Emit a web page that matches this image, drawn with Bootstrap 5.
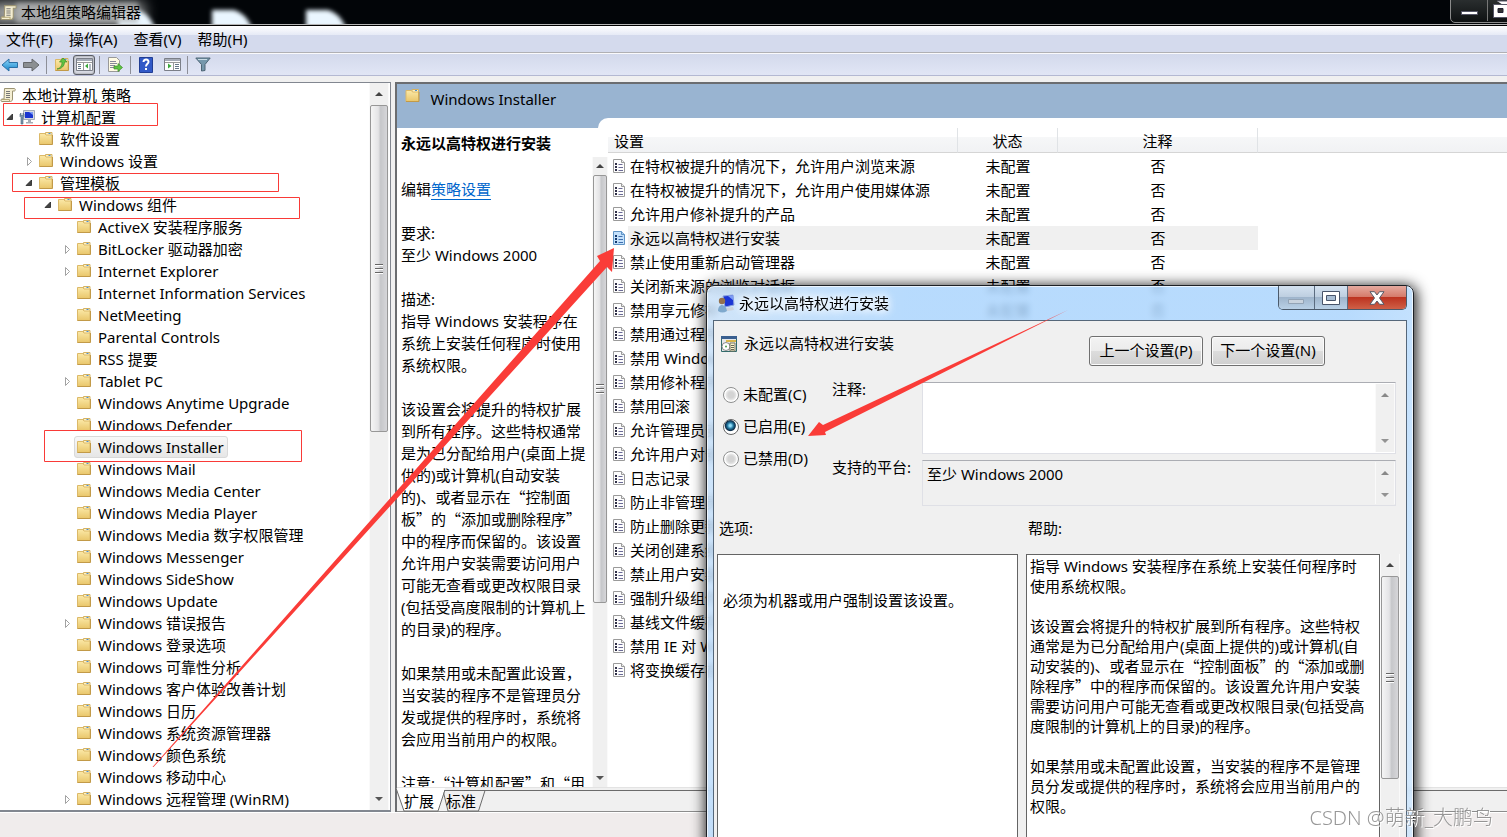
<!DOCTYPE html>
<html lang="zh-CN">
<head>
<meta charset="utf-8">
<meta name="viewport" content="width=device-width, initial-scale=1">
<title>本地组策略编辑器</title>
<link href="https://cdn.jsdelivr.net/npm/bootstrap@5.3.0/dist/css/bootstrap.min.css" rel="stylesheet">
<style>
  body { font: 15px/22px "Noto Sans", "Noto Sans CJK SC", sans-serif; color: #000; background: #f0f0f0; }
  button, textarea { font: inherit; color: inherit; }
  svg { display: block; flex: none; }
  .cjk { font-family: "Noto Sans CJK SC", sans-serif; }
  .plain { border: 0; background: none; padding: 0; }

  /* main window frame */
  .titlebar { height: 26px; background: #020508; border-bottom: 1px solid #000; box-shadow: inset 0 -1px #b5b5b5; overflow: hidden; }
  .titlebar .glow { left: 0; top: 0; }
  .titlebar h1 { font-size: 15px; line-height: 24px; }
  .caption { top: -2px; right: -37px; width: 94px; height: 25px; border: 1px solid #8b8b8b; border-radius: 0 0 5px 5px; background: linear-gradient(#2b2f30, #0e1112); }
  .menus { height: 27px; background: linear-gradient(#fff, #e6eaf6 9px, #d4daed 9px); border-bottom: 1px solid #b0b0b4; box-shadow: 0 1px #fafafc; padding-left: 6px; }
  .menus button { margin-right: 16px; }
  .tools { height: 22px; margin-top: 1px; background: linear-gradient(#d3d9ec, #e1e6f5); border-bottom: 1px solid #b4b9d2; }
  .tools button { width: 22px; height: 20px; display: flex; align-items: center; justify-content: center; }
  .tools button:first-child { width: 20px; }
  .tools .sep { width: 1px; height: 18px; background: #8d8f98; }
  .tools .held { border: 1px solid #5a5d66; border-radius: 3px; background: #d7dae3; box-shadow: inset 0 0 2px #777; }
  .panes { margin-top: 6px; min-height: 0; }

  /* tree */
  .tree-pane { flex: 0 0 391px; border: solid #828790; border-width: 1px 1px 2px 0; background: #fff; }
  .tree { padding-top: 1px; min-width: 0; overflow: hidden; }
  .tree li { display: flex; align-items: center; height: 22px; white-space: nowrap; }
  .tree .tw { width: 15px; flex: none; }
  .tree .label { padding-left: 6px; }
  .l0 { padding-left: 0; } .l1 { padding-left: 4px; } .l2 { padding-left: 23px; }
  .l3 { padding-left: 42px; } .l4 { padding-left: 61px; }
  .tree .picked { display: flex; align-items: center; height: 22px; margin-left: -2px; padding: 0 3px 0 1px; border: 1px solid #d9d9d9; border-radius: 3px; background: linear-gradient(#f8f8f8, #e6e6e6); }

  /* scroll bars */
  .sbar { width: 20px; flex: none; display: flex; flex-direction: column; background: #f0f0f0; border: solid #fafafa; border-width: 0 1px; }
  .sbar.narrow { width: 16px; }
  .sbar .end { height: 22px; display: flex; align-items: center; justify-content: center; flex: none; }
  .sbar.narrow .end { height: 18px; }
  .sbar .end::before { content: ""; border: solid transparent; border-width: 0 4px 4px; border-bottom-color: #444; }
  .sbar .end.dn::before { border-width: 4px 4px 0; border-top-color: #555; }
  .sbar.off .end::before { opacity: .6; }
  .sbar .thumb { border: 1px solid #979797; border-radius: 2px; background: linear-gradient(90deg, #f5f5f5, #e4e4e6 45%, #c6c7ca 60%, #d6d6d9); display: flex; align-items: center; justify-content: center; }
  .grip { width: 8px; height: 10px; background: repeating-linear-gradient(#666 0 1px, #fff 1px 2px, transparent 2px 4px); }

  /* right pane */
  .main-pane { margin-left: 4px; border-left: 2px solid #6b6d70; border-top: 2px solid #6b6d70; min-width: 0; }
  .banner { height: 44px; background: #99b4d1; padding: 4px 0 0 7px; }
  .banner .notch { left: 201px; right: 0; bottom: 0; height: 10px; background: #fff; border-top-left-radius: 10px; }
  .detail { flex: 0 0 211px; background: #fff; }
  .detail h2 { font-size: 15px; line-height: 22px; padding: 4px 0 3px 4px; }
  .detail .body { padding: 21px 0 0 4px; overflow: hidden; white-space: nowrap; }
  .detail p { margin-bottom: 22px; }
  .detail a { color: #0066cc; text-decoration: none; border-bottom: 1px solid #0066cc; }
  .listing { background: #fff; min-width: 0; overflow: hidden; }
  .listing table { table-layout: fixed; width: 100%; margin: 0; border-collapse: separate; border-spacing: 0; }
  .listing th { height: 25px; padding: 3px 0 0; font-weight: 400; line-height: 21px; text-align: center; background: linear-gradient(#fff 9px, #f6f7f8 9px, #f1f2f4); border-bottom: 1px solid #d5d5d5; border-right: 1px solid #e0e3e6; }
  .listing th:first-child { text-align: left; padding-left: 6px; }
  .listing th:last-child { border-right: 0; }
  .listing tbody::before { content: ""; display: table-row; height: 1px; }
  .listing td { height: 24px; padding: 0; text-align: center; white-space: nowrap; }
  .listing td:first-child > div { display: flex; align-items: center; padding-left: 4px; height: 24px; text-align: left; }
  .listing td:first-child span { flex: 1; padding-left: 2px; line-height: 24px; margin-left: 2px; }
  .listing tr.on td:nth-child(n+2):nth-child(-n+3), .listing tr.on span { background: #f0f0f0; }
  .strip { height: 25px; background: #f0f0f0; border-top: 1px solid #e3e3e3; border-bottom: 1px solid #8c8c8c; padding-left: 7px; }
  .strip svg { left: -2px; top: 0; }
  .strip .edge { left: 48px; right: 0; top: 2px; height: 1px; background: #6b6b6b; }
  .strip button { margin-top: 2px; margin-right: 12px; }
  .status { height: 25px; background: #f0ecec; border-top: 1px solid #fff; }

  /* floating dialog */
  .dlg { left: 706px; top: 285px; bottom: -14px; width: 708px; border: 1px solid #1d2126; border-radius: 8px; padding: 0 6px; background: linear-gradient(100deg, rgba(200,224,248,.82), rgba(170,212,253,.84) 25%, rgba(170,212,253,.84) 80%, rgba(205,230,253,.84)); backdrop-filter: blur(3px); box-shadow: 1px 2px 14px 2px rgba(0,0,0,.85), inset 0 0 0 1px rgba(255,255,255,.7); }
  .dlg-title { height: 34px; }
  .dlg-title h2 { font-size: 15px; line-height: 34px; text-shadow: 0 0 8px #fff, 0 0 8px #fff, 0 0 8px #fff; }
  .capset { width: 129px; height: 24px; border: 1px solid #4b5a6b; border-top: 0; border-radius: 0 0 5px 5px; overflow: hidden; }
  .capset button { border-right: 1px solid #5b6c80; background: linear-gradient(#d4e2f0, #bccddf 50%, #9fb5cc 50%, #b9d0e6); display: flex; align-items: center; justify-content: center; }
  .capset .shut { background: linear-gradient(#e5aa9f, #d47767 50%, #bd3320 50%, #cf6047); border-right: 0; }
  .dlg-body { background: #f0f0f0; border: 1px solid #55677a; padding: 15px 6px 0 3px; }
  .dlg-name { line-height: 14px; padding-left: 7px; }
  .step { width: 114px; height: 30px; padding: 0 0 2px; border: 1px solid #707070; border-radius: 3px; background: linear-gradient(#f3f3f3, #ebebeb 50%, #dddddd 50%, #cfcfcf); box-shadow: inset 0 0 0 1px #fbfbfb; }
  .step.last { margin-right: 75px; }
  .choices { width: 109px; margin: -4px 0 0 2px; }
  .pick { height: 32px; display: flex; align-items: center; }
  .pick input { appearance: none; width: 16px; height: 16px; margin: 2px 4px 0 0; border: 1px solid #8e8f8f; border-radius: 50%; background: radial-gradient(circle, #d4d4d4 0 3px, #e8e8e8 5px, #fff 6px); }
  .pick input:checked { background: radial-gradient(circle at 45% 40%, #8fdcf8 0 1px, #2277a0 3px, #0d2c48 5px, #fff 6px); border-color: #666; }
  .cap-col { width: 90px; line-height: 15px; }
  .field { height: 72px; border: 1px solid #dfe0e6; border-top-color: #abadb3; background: #fff; }
  .field textarea { resize: none; border: 0; outline: 0; background: none; overflow: hidden; padding: 2px 4px; line-height: 22px; }
  .field.dim { height: 46px; background: #f0f0f0; }
  .field .sbar { margin: 1px 0; }
  .group-name { height: 40px; padding: 3px 2px 0; }
  .box { background: #fff; border: 1px solid #646464; }
  .opts { padding: 34px 5px; }
  .help { line-height: 20px; white-space: nowrap; padding: 1px 3px; overflow: hidden; }
  .help p { margin-bottom: 20px; }

  .ink { inset: 0; pointer-events: none; }
  .brand { right: 14px; bottom: 7px; font-size: 20px; line-height: 24px; font-weight: 300; color: rgba(140,140,140,.9); text-shadow: 1px 1px #fff; }
</style>
</head>
<body>
<svg width="0" height="0" class="position-absolute" aria-hidden="true">
  <defs>
    <linearGradient id="gf" x1="0" y1="0" x2="0" y2="1"><stop offset="0" stop-color="#fbe9a8"/><stop offset="1" stop-color="#e9c66a"/></linearGradient>
    <linearGradient id="gb" x1="0" y1="0" x2="0" y2="1"><stop offset="0" stop-color="#8fd8fb"/><stop offset="1" stop-color="#1583c9"/></linearGradient>
    <symbol id="folder" viewBox="0 0 16 16"><path d="M7.500 1.500h6.500v3H7.500z" fill="#fff3c4" stroke="#d4b263"/><path d="M10.500 2.500h2" stroke="#4b8fd0"/><path d="M1.500 2.500h5.500l1 1.500h6v9.500H1.500z" fill="url(#gf)" stroke="#dcb968"/><path d="M1.500 13.500h13V4" fill="none" stroke="#c29a48"/></symbol>
    <symbol id="scroll" viewBox="0 0 16 16"><path d="M4.500 1.500h10c1 0 1 2.500 0 2.500H12.500v8c0 1.500-1 2.500-2 2.500H2c-1.500 0-1.500-2.500 0-2.500h2z" fill="#f4eed2" stroke="#9b9372"/><path d="M6 4.500h4M6 6.500h4M6 8.500h4M6 10.500h4" stroke="#777"/><path d="M2 12.500h7.500v2" fill="none" stroke="#b3a878"/></symbol>
    <symbol id="pc" viewBox="0 0 16 16"><path d="M4.500 1.500h11v9h-11z" fill="#d6dbe3" stroke="#a3abb8"/><path d="M6 3h8v6H6z" fill="#1a36d0"/><path d="M10 3h4v3z" fill="#7c9cf5"/><path d="M9 11h3v2h2v1.500H7V13h2z" fill="#a5acb5"/><path d="M1 5v2.500l1 1V15h2V8.500l1-1V5L4 4v2.500H2V4z" fill="#7794ac" stroke="#4d667d" stroke-width=".6"/></symbol>
    <symbol id="doc" viewBox="0 0 14 16"><path d="M1.500 1.500h8l3 3v10h-11z" fill="#fdfdfd" stroke="#9a9a9a"/><path d="M9.500 1.500v3h3" fill="#eee" stroke="#9a9a9a"/><path d="M3 5h2v2H3zM3 8h2v2H3zM3 11h2v2H3z" fill="#303048"/><path d="M6.500 6.500h4M6.500 9.500h4.500M6.500 12.500h4.500" stroke="#6b6b96"/></symbol>
    <symbol id="docon" viewBox="0 0 14 16"><path d="M1.500 1.500h8l3 3v10h-11z" fill="#c3e0fb" stroke="#5f93c4"/><path d="M9.500 1.500v3h3" fill="#a9cdf2" stroke="#5f93c4"/><path d="M3 5h2v2H3zM3 8h2v2H3zM3 11h2v2H3z" fill="#14386c"/><path d="M6.500 6.500h4M6.500 9.500h4.500M6.500 12.500h4.500" stroke="#3f6fae"/></symbol>
    <symbol id="open" viewBox="0 0 16 16"><path d="M8.500 5v5.500H3z" fill="#444" stroke="#222" stroke-width=".8"/></symbol>
    <symbol id="shut" viewBox="0 0 16 16"><path d="M4.500 4.500l4 4-4 4z" fill="#fff" stroke="#a2a2a2"/></symbol>
  </defs>
</svg>

<div class="d-flex flex-column vh-100 position-relative overflow-hidden">
  <header class="titlebar position-relative flex-shrink-0 d-flex">
    <svg class="glow position-absolute" width="400" height="24" aria-hidden="true">
      <defs><filter id="b3" x="-20%" y="-60%" width="140%" height="220%"><feGaussianBlur stdDeviation="2"/></filter><filter id="b8" x="-20%" y="-90%" width="140%" height="280%"><feGaussianBlur stdDeviation="7"/></filter></defs>
      <rect x="-10" y="2" width="154" height="22" fill="#a2a4a4" filter="url(#b8)"/>
      <path d="M118 28V11h22q10 4 15 17zM212 28V10h22q12 3 18 18zM306 28V10h22q12 3 18 18z" fill="#eaf6ff" filter="url(#b3)"/>
      <rect x="16" y="3" width="122" height="20" fill="#b4b6b6" opacity=".7" filter="url(#b3)"/>
    </svg>
    <svg class="position-relative ms-n1 mt-1" width="17" height="17"><use href="#scroll"/></svg>
    <h1 class="position-relative m-0 ps-1 fw-normal">本地组策略编辑器</h1>
    <div class="caption position-absolute">
      <svg width="94" height="24"><path d="M36.500 0v22" stroke="#777"/><path d="M10.500 12.500h16v3h-16z" fill="#fff" stroke="#556"/><path d="M46 2h14v9M42.500 5.500h15v13h-15z" fill="#fff" stroke="#556"/><path d="M47 9.500h5v4h-5z" fill="#333" stroke="#223"/></svg>
    </div>
  </header>

  <nav class="menus d-flex align-items-center flex-shrink-0">
    <button class="plain">文件(F)</button><button class="plain">操作(A)</button><button class="plain">查看(V)</button><button class="plain">帮助(H)</button>
  </nav>

  <div class="tools d-flex align-items-center flex-shrink-0" role="toolbar">
    <button class="plain" aria-label="后退"><svg width="18" height="16"><path d="M1 8l7-6v3.500h8.500v5H8V14z" fill="url(#gb)" stroke="#2b6fa5"/></svg></button>
    <button class="plain" aria-label="前进"><svg width="18" height="16"><path d="M17 8l-7-6v3.500H1.500v5H10V14z" fill="#8b8f92" stroke="#66696c"/></svg></button>
    <span class="sep ms-1 me-1"></span>
    <button class="plain" aria-label="向上"><svg width="16" height="16"><use href="#folder"/><path d="M3 12c4-1 5-4 5-7H5.500L9 1l4 4h-2.500c0 4-3 7-7.500 7z" fill="#5fc443" stroke="#3d8c28" stroke-width=".7"/></svg></button>
    <button class="plain held" aria-label="显示树"><svg width="17" height="15"><path d="M.5 1.500h16v12H.5z" fill="#fff" stroke="#7b7f88"/><path d="M1 2h15v2H1z" fill="#a6acb8"/><path d="M1 5.500h15M7.500 6v7" stroke="#999"/><path d="M2 7.500h3M2 9.500h3M2 11.500h3M14 7v6" stroke="#678"/><path d="M12 6.500v5L9 9z" fill="#3ba83b"/></svg></button>
    <span class="sep ms-1 me-1"></span>
    <button class="plain" aria-label="导出"><svg width="16" height="16"><path d="M1.500.5h8l3 3v11h-11z" fill="#fffbe4" stroke="#999"/><path d="M3 4.500h6M3 6.500h7M3 8.500h5M3 10.500h4" stroke="#889"/><path d="M7 9h4V6.500l4.500 4-4.500 4V12H7z" fill="#5fc443" stroke="#3d8c28" stroke-width=".7"/></svg></button>
    <span class="sep ms-1 me-1"></span>
    <button class="plain" aria-label="帮助"><svg width="14" height="16"><path d="M.5.5h13v15H.5z" fill="#3159c7" stroke="#213e94"/><path d="M4.500 5c0-3.500 5.500-3 5 0-.2 1.800-2.500 1.800-2.500 4.500M7 11v2" fill="none" stroke="#fff" stroke-width="2"/></svg></button>
    <button class="plain ms-1" aria-label="窗格"><svg width="17" height="15"><path d="M.5 1.500h16v12H.5z" fill="#fff" stroke="#7b7f88"/><path d="M1 2h15v2H1z" fill="#a6acb8"/><path d="M1 5.500h15M9.500 6v7" stroke="#999"/><path d="M11 7.500h4M11 9.500h4M11 11.500h4" stroke="#678"/><path d="M4 6.500v5L7.500 9z" fill="#3ba83b"/></svg></button>
    <span class="sep ms-1 me-1"></span>
    <button class="plain" aria-label="筛选"><svg width="16" height="15"><path d="M.8 1h14.400L10 7.500v6L6.500 14V7.500z" fill="#7698ac" stroke="#4d6574"/><path d="M3 2.500h9" stroke="#c9dce6"/></svg></button>
  </div>

  <div class="panes flex-grow-1 d-flex">
    <aside class="tree-pane d-flex">
      <ul class="tree list-unstyled m-0 flex-grow-1">
        <li class="l0"><svg width="16" height="16"><use href="#scroll"/></svg><span class="label">本地计算机 策略</span></li>
        <li class="l1"><svg class="tw" height="16"><use href="#open" width="16" height="16"/></svg><svg width="16" height="16"><use href="#pc"/></svg><span class="label">计算机配置</span></li>
        <li class="l2"><span class="tw"></span><svg width="16" height="16"><use href="#folder"/></svg><span class="label">软件设置</span></li>
        <li class="l2"><svg class="tw" height="16"><use href="#shut" width="16" height="16"/></svg><svg width="16" height="16"><use href="#folder"/></svg><span class="label">Windows 设置</span></li>
        <li class="l2"><svg class="tw" height="16"><use href="#open" width="16" height="16"/></svg><svg width="16" height="16"><use href="#folder"/></svg><span class="label">管理模板</span></li>
        <li class="l3"><svg class="tw" height="16"><use href="#open" width="16" height="16"/></svg><svg width="16" height="16"><use href="#folder"/></svg><span class="label">Windows 组件</span></li>
        <li class="l4"><span class="tw"></span><svg width="16" height="16"><use href="#folder"/></svg><span class="label">ActiveX 安装程序服务</span></li>
        <li class="l4"><svg class="tw" height="16"><use href="#shut" width="16" height="16"/></svg><svg width="16" height="16"><use href="#folder"/></svg><span class="label">BitLocker 驱动器加密</span></li>
        <li class="l4"><svg class="tw" height="16"><use href="#shut" width="16" height="16"/></svg><svg width="16" height="16"><use href="#folder"/></svg><span class="label">Internet Explorer</span></li>
        <li class="l4"><span class="tw"></span><svg width="16" height="16"><use href="#folder"/></svg><span class="label">Internet Information Services</span></li>
        <li class="l4"><span class="tw"></span><svg width="16" height="16"><use href="#folder"/></svg><span class="label">NetMeeting</span></li>
        <li class="l4"><span class="tw"></span><svg width="16" height="16"><use href="#folder"/></svg><span class="label">Parental Controls</span></li>
        <li class="l4"><span class="tw"></span><svg width="16" height="16"><use href="#folder"/></svg><span class="label">RSS 提要</span></li>
        <li class="l4"><svg class="tw" height="16"><use href="#shut" width="16" height="16"/></svg><svg width="16" height="16"><use href="#folder"/></svg><span class="label">Tablet PC</span></li>
        <li class="l4"><span class="tw"></span><svg width="16" height="16"><use href="#folder"/></svg><span class="label">Windows Anytime Upgrade</span></li>
        <li class="l4"><span class="tw"></span><svg width="16" height="16"><use href="#folder"/></svg><span class="label">Windows Defender</span></li>
        <li class="l4"><span class="tw"></span><span class="picked"><svg width="16" height="16"><use href="#folder"/></svg><span class="label">Windows Installer</span></span></li>
        <li class="l4"><span class="tw"></span><svg width="16" height="16"><use href="#folder"/></svg><span class="label">Windows Mail</span></li>
        <li class="l4"><span class="tw"></span><svg width="16" height="16"><use href="#folder"/></svg><span class="label">Windows Media Center</span></li>
        <li class="l4"><span class="tw"></span><svg width="16" height="16"><use href="#folder"/></svg><span class="label">Windows Media Player</span></li>
        <li class="l4"><span class="tw"></span><svg width="16" height="16"><use href="#folder"/></svg><span class="label">Windows Media 数字权限管理</span></li>
        <li class="l4"><span class="tw"></span><svg width="16" height="16"><use href="#folder"/></svg><span class="label">Windows Messenger</span></li>
        <li class="l4"><span class="tw"></span><svg width="16" height="16"><use href="#folder"/></svg><span class="label">Windows SideShow</span></li>
        <li class="l4"><span class="tw"></span><svg width="16" height="16"><use href="#folder"/></svg><span class="label">Windows Update</span></li>
        <li class="l4"><svg class="tw" height="16"><use href="#shut" width="16" height="16"/></svg><svg width="16" height="16"><use href="#folder"/></svg><span class="label">Windows 错误报告</span></li>
        <li class="l4"><span class="tw"></span><svg width="16" height="16"><use href="#folder"/></svg><span class="label">Windows 登录选项</span></li>
        <li class="l4"><span class="tw"></span><svg width="16" height="16"><use href="#folder"/></svg><span class="label">Windows 可靠性分析</span></li>
        <li class="l4"><span class="tw"></span><svg width="16" height="16"><use href="#folder"/></svg><span class="label">Windows 客户体验改善计划</span></li>
        <li class="l4"><span class="tw"></span><svg width="16" height="16"><use href="#folder"/></svg><span class="label">Windows 日历</span></li>
        <li class="l4"><span class="tw"></span><svg width="16" height="16"><use href="#folder"/></svg><span class="label">Windows 系统资源管理器</span></li>
        <li class="l4"><span class="tw"></span><svg width="16" height="16"><use href="#folder"/></svg><span class="label">Windows 颜色系统</span></li>
        <li class="l4"><span class="tw"></span><svg width="16" height="16"><use href="#folder"/></svg><span class="label">Windows 移动中心</span></li>
        <li class="l4"><svg class="tw" height="16"><use href="#shut" width="16" height="16"/></svg><svg width="16" height="16"><use href="#folder"/></svg><span class="label">Windows 远程管理 (WinRM)</span></li>
      </ul>
      <div class="sbar" style="margin-right:1px"><div class="end"></div><div class="thumb" style="height:45%"><div class="grip"></div></div><div class="end dn mt-auto"></div></div>
    </aside>

    <main class="main-pane flex-grow-1 d-flex flex-column">
      <div class="banner position-relative flex-shrink-0 d-flex align-items-start">
        <svg width="17" height="16"><use href="#folder"/></svg><span class="ps-2">&hairsp;Windows Installer</span>
        <div class="notch position-absolute"></div>
      </div>
      <div class="flex-grow-1 d-flex overflow-hidden bg-white">
        <section class="detail d-flex flex-column">
          <h2 class="m-0 fw-bold">永远以高特权进行安装</h2>
          <div class="d-flex flex-grow-1 overflow-hidden">
            <div class="body flex-grow-1">
              <p>编辑<a href="#">策略设置</a></p>
              <p>要求:<br>至少 Windows 2000</p>
              <p>描述:<br>指导 Windows 安装程序在<br>系统上安装任何程序时使用<br>系统权限。</p>
              <p>该设置会将提升的特权扩展<br>到所有程序。这些特权通常<br>是为已分配给用户(桌面上提<br>供的)或计算机(自动安装<br>的)、或者显示在<span class="cjk">“</span>控制面<br>板<span class="cjk">”</span>的<span class="cjk">“</span>添加或删除程序<span class="cjk">”</span><br>中的程序而保留的。该设置<br>允许用户安装需要访问用户<br>可能无查看或更改权限目录<br>(包括受高度限制的计算机上<br>的目录)的程序。</p>
              <p>如果禁用或未配置此设置，<br>当安装的程序不是管理员分<br>发或提供的程序时，系统将<br>会应用当前用户的权限。</p>
              <p>注意:<span class="cjk">“</span>计算机配置<span class="cjk">”</span>和<span class="cjk">“</span>用</p>
            </div>
            <div class="sbar narrow"><div class="end"></div><div class="thumb" style="height:68%"><div class="grip"></div></div><div class="end dn mt-auto"></div></div>
          </div>
        </section>
        <section class="listing flex-grow-1">
          <table>
            <colgroup><col style="width:350px"><col style="width:100px"><col style="width:200px"><col></colgroup>
            <thead><tr><th>设置</th><th>状态</th><th>注释</th><th></th></tr></thead>
            <tbody>
              <tr><td><div><svg width="14" height="16"><use href="#doc"/></svg><span>在特权被提升的情况下，允许用户浏览来源</span></div></td><td>未配置</td><td>否</td><td></td></tr>
              <tr><td><div><svg width="14" height="16"><use href="#doc"/></svg><span>在特权被提升的情况下，允许用户使用媒体源</span></div></td><td>未配置</td><td>否</td><td></td></tr>
              <tr><td><div><svg width="14" height="16"><use href="#doc"/></svg><span>允许用户修补提升的产品</span></div></td><td>未配置</td><td>否</td><td></td></tr>
              <tr class="on"><td><div><svg width="14" height="16"><use href="#docon"/></svg><span>永远以高特权进行安装</span></div></td><td>未配置</td><td>否</td><td></td></tr>
              <tr><td><div><svg width="14" height="16"><use href="#doc"/></svg><span>禁止使用重新启动管理器</span></div></td><td>未配置</td><td>否</td><td></td></tr>
              <tr><td><div><svg width="14" height="16"><use href="#doc"/></svg><span>关闭新来源的浏览对话框</span></div></td><td>未配置</td><td>否</td><td></td></tr>
              <tr><td><div><svg width="14" height="16"><use href="#doc"/></svg><span>禁用享元修补</span></div></td><td>未配置</td><td>否</td><td></td></tr>
              <tr><td><div><svg width="14" height="16"><use href="#doc"/></svg><span>禁用通过程序</span></div></td><td></td><td></td><td></td></tr>
              <tr><td><div><svg width="14" height="16"><use href="#doc"/></svg><span>禁用 Windows</span></div></td><td></td><td></td><td></td></tr>
              <tr><td><div><svg width="14" height="16"><use href="#doc"/></svg><span>禁用修补程序</span></div></td><td></td><td></td><td></td></tr>
              <tr><td><div><svg width="14" height="16"><use href="#doc"/></svg><span>禁用回滚</span></div></td><td></td><td></td><td></td></tr>
              <tr><td><div><svg width="14" height="16"><use href="#doc"/></svg><span>允许管理员安</span></div></td><td></td><td></td><td></td></tr>
              <tr><td><div><svg width="14" height="16"><use href="#doc"/></svg><span>允许用户对安</span></div></td><td></td><td></td><td></td></tr>
              <tr><td><div><svg width="14" height="16"><use href="#doc"/></svg><span>日志记录</span></div></td><td></td><td></td><td></td></tr>
              <tr><td><div><svg width="14" height="16"><use href="#doc"/></svg><span>防止非管理员</span></div></td><td></td><td></td><td></td></tr>
              <tr><td><div><svg width="14" height="16"><use href="#doc"/></svg><span>防止删除更新</span></div></td><td></td><td></td><td></td></tr>
              <tr><td><div><svg width="14" height="16"><use href="#doc"/></svg><span>关闭创建系统</span></div></td><td></td><td></td><td></td></tr>
              <tr><td><div><svg width="14" height="16"><use href="#doc"/></svg><span>禁止用户安装</span></div></td><td></td><td></td><td></td></tr>
              <tr><td><div><svg width="14" height="16"><use href="#doc"/></svg><span>强制升级组件</span></div></td><td></td><td></td><td></td></tr>
              <tr><td><div><svg width="14" height="16"><use href="#doc"/></svg><span>基线文件缓存</span></div></td><td></td><td></td><td></td></tr>
              <tr><td><div><svg width="14" height="16"><use href="#doc"/></svg><span>禁用 IE 对 W</span></div></td><td></td><td></td><td></td></tr>
              <tr><td><div><svg width="14" height="16"><use href="#doc"/></svg><span>将变换缓存在</span></div></td><td></td><td></td><td></td></tr>
            </tbody>
          </table>
        </section>
      </div>
      <div class="strip position-relative flex-shrink-0 d-flex">
        <div class="edge position-absolute"></div>
        <svg class="position-absolute" width="100" height="24" aria-hidden="true"><path d="M48 2.500h42L83.500 23H53z" fill="#f0f0f0" stroke="#6b6b6b"/><path d="M1 0l8 23h34L50 0z" fill="#fff"/><path d="M1 0l8 23h34L50 2" fill="none" stroke="#6b6b6b"/></svg>
        <button class="plain position-relative">扩展</button><button class="plain position-relative">标准</button>
      </div>
    </main>
  </div>
  <footer class="status flex-shrink-0"></footer>

  <div class="dlg position-absolute d-flex flex-column" role="dialog" aria-label="永远以高特权进行安装">
    <div class="dlg-title d-flex flex-shrink-0">
      <svg class="mt-2 ms-1" width="18" height="19"><path d="M6 2l10-1 1 10-9 2z" fill="#1c36d4" stroke="#8ba1dc"/><path d="M11 2l5-.5.5 5z" fill="#7c9cf5"/><path d="M9 14l7-1 1 3-7 1z" fill="#cdd3db"/><circle cx="5" cy="7" r="3.200" fill="#94714d"/><path d="M1 17c0-8 8-8 9 0-3 2-6 2-9 0z" fill="#7fa9cd"/></svg>
      <h2 class="m-0 fw-normal ps-1 position-relative">永远以高特权进行安装</h2>
      <div class="capset ms-auto d-flex">
        <button class="plain" style="flex:36" aria-label="最小化"><svg width="18" height="12"><path d="M1.500 7.500h15v4h-15z" fill="#c9d3de" stroke="#93a3b5"/></svg></button>
        <button class="plain" style="flex:33" aria-label="最大化"><svg width="18" height="14"><path d="M.5.5h17v13H.5z" fill="#fff" stroke="#48546a"/><path d="M4.500 4.500h9v5h-9z" fill="#a8bdd4" stroke="#48546a"/></svg></button>
        <button class="plain shut" style="flex:60" aria-label="关闭"><svg width="16" height="14"><path d="M1 .7h4.500L8 4l2.500-3.300H15L10.500 7l4.500 6.300h-4.500L8 10l-2.500 3.300H1L5.500 7z" fill="#fff" stroke="#555a68"/></svg></button>
      </div>
    </div>
    <div class="dlg-body flex-grow-1 d-flex flex-column overflow-hidden">
      <div class="d-flex ps-1">
        <svg width="16" height="16"><path d="M.5.500h15v15H.5z" fill="#e6e8ea" stroke="#336b6b"/><path d="M0 0h16v3H0z" fill="#3a5f8f"/><path d="M5 4h10v2H5z" fill="#d9b64a"/><circle cx="5" cy="10.500" r="4" fill="#fff" stroke="#8a8a8a"/><circle cx="5" cy="10.500" r="1" fill="#4a9a4a"/><path d="M9 7h5v8H9z" fill="#fff5c9" stroke="#776"/><path d="M10 9.500h3M10 11.500h3M10 13.500h3" stroke="#665"/></svg>
        <span class="dlg-name flex-grow-1">永远以高特权进行安装</span>
        <button class="step me-2">上一个设置(P)</button><button class="step last">下一个设置(N)</button>
      </div>
      <div class="d-flex mt-3 ps-1">
        <div class="choices">
          <div class="pick"><input type="radio" name="st" id="r1"><label for="r1">未配置(C)</label></div>
          <div class="pick"><input type="radio" name="st" id="r2" checked><label for="r2">已启用(E)</label></div>
          <div class="pick"><input type="radio" name="st" id="r3"><label for="r3">已禁用(D)</label></div>
        </div>
        <div class="flex-grow-1 pe-1">
          <div class="d-flex"><label for="note" class="cap-col">注释:</label>
            <div class="field d-flex flex-grow-1"><textarea id="note" class="flex-grow-1" rows="3"></textarea><div class="sbar off"><div class="end"></div><div class="end dn mt-auto"></div></div></div></div>
          <div class="d-flex" style="margin-top:6px"><label for="plat" class="cap-col">支持的平台:</label>
            <div class="field dim d-flex flex-grow-1"><textarea id="plat" class="flex-grow-1" rows="2" readonly>至少 Windows 2000</textarea><div class="sbar off"><div class="end"></div><div class="end dn mt-auto"></div></div></div></div>
        </div>
      </div>
      <div class="flex-grow-1 d-flex pt-2" style="min-height:0">
        <div class="d-flex flex-column" style="width:301px"><div class="group-name">选项:</div><div class="box opts flex-grow-1">必须为机器或用户强制设置该设置。</div></div>
        <div class="d-flex flex-column flex-grow-1 ms-2"><div class="group-name">帮助:</div>
          <div class="d-flex flex-grow-1" style="min-height:0">
            <div class="box help flex-grow-1">
              <p>指导 Windows 安装程序在系统上安装任何程序时<br>使用系统权限。</p>
              <p>该设置会将提升的特权扩展到所有程序。这些特权<br>通常是为已分配给用户(桌面上提供的)或计算机(自<br>动安装的)、或者显示在<span class="cjk">“</span>控制面板<span class="cjk">”</span>的<span class="cjk">“</span>添加或删<br>除程序<span class="cjk">”</span>中的程序而保留的。该设置允许用户安装<br>需要访问用户可能无查看或更改权限目录(包括受高<br>度限制的计算机上的目录)的程序。</p>
              <p>如果禁用或未配置此设置，当安装的程序不是管理<br>员分发或提供的程序时，系统将会应用当前用户的<br>权限。</p>
            </div>
            <div class="sbar"><div class="end"></div><div class="thumb" style="height:203px"><div class="grip"></div></div></div>
          </div>
        </div>
      </div>
    </div>
  </div>

  <svg class="ink position-absolute" width="100%" height="100%" aria-hidden="true">
    <g fill="none" stroke="#f93a37"><path d="M3.500 103.500h154v22h-154zM12.500 173.500h266v18h-266zM24.500 197.500h275v21h-275zM44.500 430.500h257v31h-257z"/></g>
    <g fill="#fa3c38"><path d="M152.500 767L600 261l-3-5 17-8-2 24-5-5L153.500 767z"/><path d="M1068 310L823 425l-4-3-11 14 18-1-1-3z"/></g>
  </svg>
  <div class="brand position-absolute">CSDN @萌新_大鹏鸟</div>
</div>
<script src="https://cdn.jsdelivr.net/npm/bootstrap@5.3.0/dist/js/bootstrap.bundle.min.js"></script>
</body>
</html>
